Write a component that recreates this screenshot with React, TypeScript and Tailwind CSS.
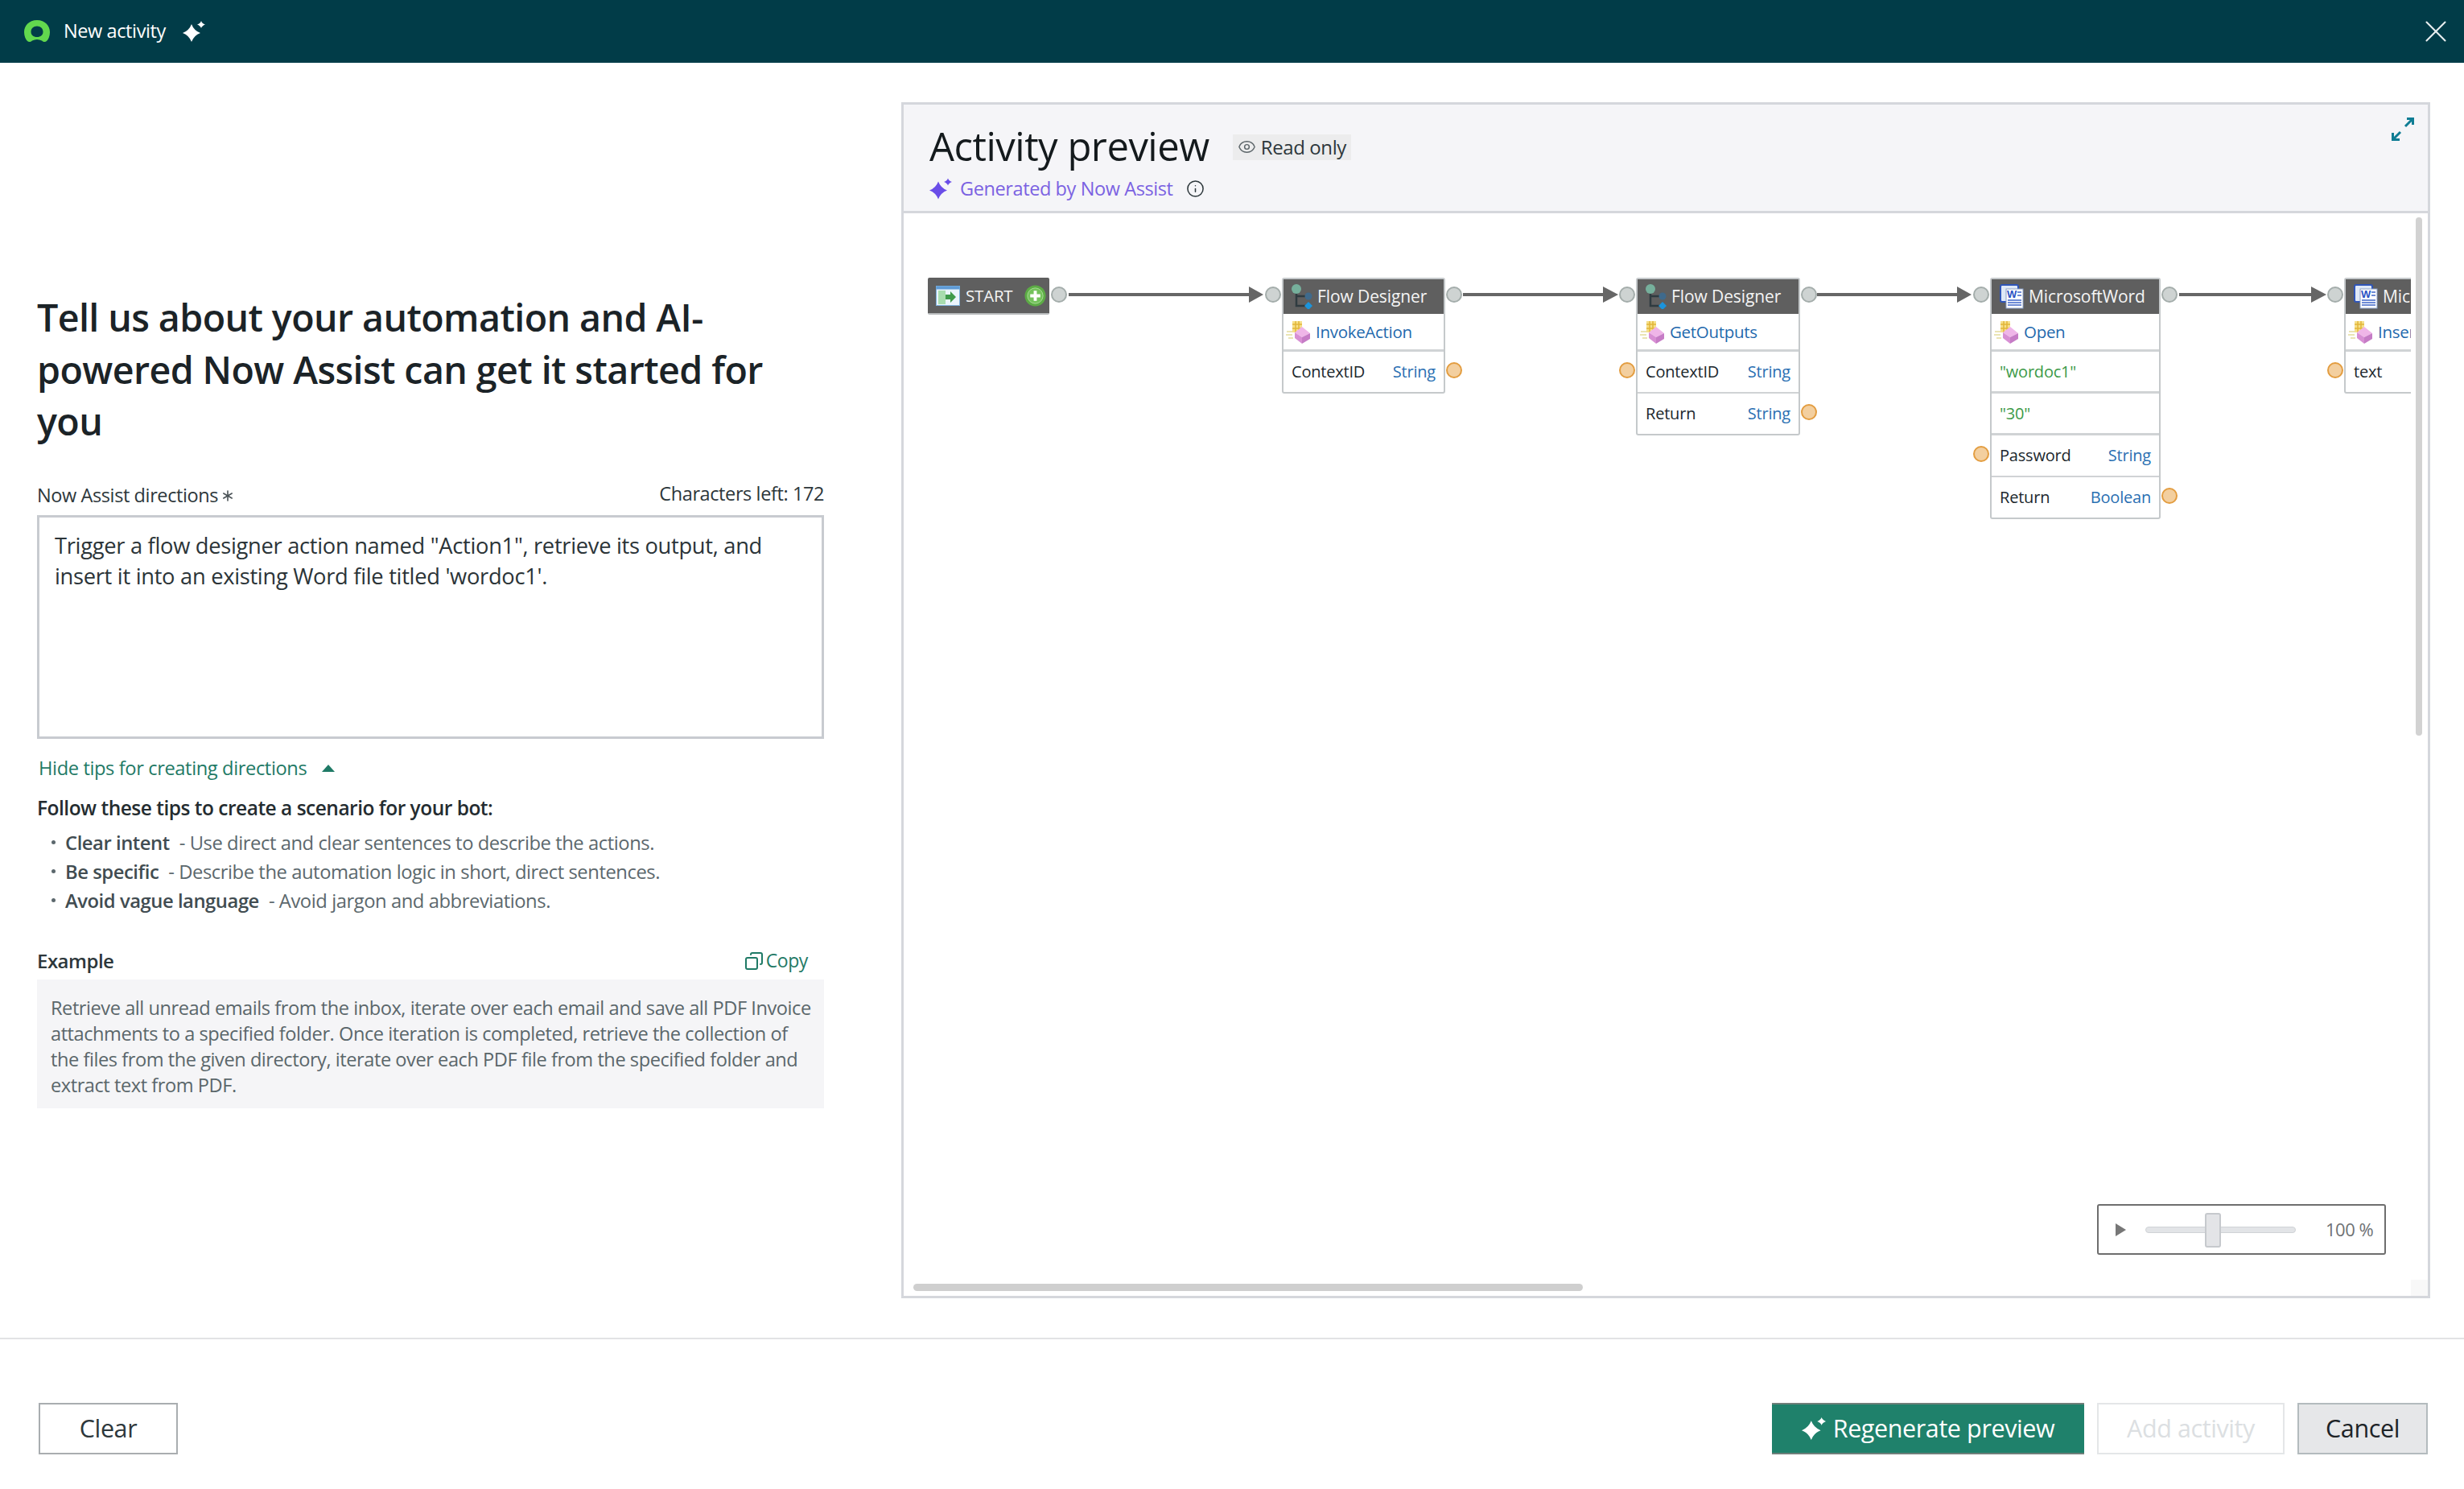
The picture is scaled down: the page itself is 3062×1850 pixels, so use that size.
import React from 'react'
import { X, Eye, Info, Copy, Asterisk } from 'lucide-react'

const Sparkles = ({ className }: { className: string }) => (
  <svg viewBox="0 0 28 26" className={className} fill="currentColor">
    <path d="M11 4 Q14 12 22 15 Q14 18 11 26 Q8 18 0 15 Q8 12 11 4Z" />
    <path d="M23 0 Q24 3 28 4.5 Q24 6 23 9 Q22 6 18 4.5 Q22 3 23 0Z" />
  </svg>
)

const Logo = () => (
  <svg viewBox="0 0 32 28" className="w-[32px] h-[28px]">
    <path
      fillRule="evenodd"
      fill="#62d84e"
      d="M16 0 C26 0 32 7 32 15 C32 20 30 24 28 26 C26 28 24 27 22 25.5 C18 23.5 14 23.5 10 25.5 C8 27 6 28 4 26 C2 24 0 20 0 15 C0 7 6 0 16 0Z M16 7.5 C11.5 7.5 8.5 10.5 8.5 14.5 C8.5 18.5 11.5 21 16 21 C20.5 21 23.5 18.5 23.5 14.5 C23.5 10.5 20.5 7.5 16 7.5Z"
    />
  </svg>
)

const ExpandIcon = () => (
  <svg viewBox="0 0 28 29" className="w-[28px] h-[29px]" fill="none" stroke="#0f7d94" strokeWidth="3">
    <path d="M17 11 L27 1 M19 1.5 H26.5 V9" />
    <path d="M11 18 L1.5 27.5 M1.5 19 V27.5 H10" />
  </svg>
)

const StartIcon = () => (
  <svg viewBox="0 0 30 25" className="w-[30px] h-[25px] shrink-0">
    <rect x="0.5" y="0.5" width="29" height="24" fill="#eaf4fb" stroke="#7fb2dc" />
    <rect x="0.5" y="0.5" width="29" height="4" fill="#5f9bd5" />
    <rect x="3" y="6" width="9" height="17" fill="#a8dcae" />
    <path d="M12 11 H18 V7 L25 14 L18 21 V17 H12Z" fill="#3f9a4a" />
  </svg>
)

const PlusIcon = () => (
  <svg viewBox="0 0 28 28" className="w-[27px] h-[27px] shrink-0">
    <circle cx="14" cy="14" r="13.5" fill="#5cab45" />
    <circle cx="14" cy="14" r="10" fill="#74c25c" stroke="#a9dc97" />
    <path d="M14 7.5 V20.5 M7.5 14 H20.5" stroke="#ffffff" strokeWidth="4" />
  </svg>
)

const FlowIcon = () => (
  <svg viewBox="0 0 26 31" className="w-[26px] h-[31px] shrink-0">
    <path d="M6 10 V27 H19 M6 15 H19" fill="none" stroke="#2f3b40" strokeWidth="2.5" />
    <circle cx="6" cy="6" r="6" fill="#76b09c" />
    <circle cx="21" cy="15" r="4.5" fill="#3f6a8c" />
    <path d="M21 22 L26 27 L21 32 L16 27Z" fill="#1b94dc" />
  </svg>
)

const WordIcon = () => (
  <svg viewBox="0 0 30 31" className="w-[30px] h-[31px] shrink-0">
    <rect x="1" y="1" width="22" height="21" rx="2" fill="#dfe8f7" stroke="#2f55b8" strokeWidth="2" />
    <rect x="8" y="6" width="21" height="24" fill="#ffffff" stroke="#8aa0c8" />
    <text x="9" y="17" fontSize="13" fontWeight="700" fill="#2b52c4" fontFamily="Liberation Sans, sans-serif">
      W
    </text>
    <path d="M22 10 H27 M22 14 H27 M10 20 H27 M10 23 H27 M10 26 H27" stroke="#3f66c9" strokeWidth="1.5" />
  </svg>
)

const ActionIcon = () => (
  <svg viewBox="0 0 30 29" className="w-[30px] h-[29px] shrink-0">
    <path d="M8 1 H20 V15 H8Z" fill="#f6e08a" />
    <path d="M8 5 H20 M8 10 H20 M12 1 V15 M16 1 V15" stroke="#e2b53a" strokeWidth="1.5" />
    <path d="M1 14 H8 M0 18 H8 M3 22 H9" stroke="#e4dc9c" strokeWidth="1.5" />
    <path d="M20 8 L30 16 L20 21 L11 15Z" fill="#efb5e8" />
    <path d="M11 15 L20 21 V29 L11 22Z" fill="#d88fd4" />
    <path d="M30 16 V23 L20 29 V21Z" fill="#c67cc6" />
  </svg>
)

const GreyPort = ({ className }: { className: string }) => (
  <span className={`absolute w-[20px] h-[20px] rounded-full bg-[#ced3d2] border-2 border-[#a4adab] ${className}`} />
)

const OrangePort = ({ className }: { className: string }) => (
  <span className={`absolute w-[20px] h-[20px] rounded-full bg-[#f3cf9f] border-2 border-[#e39d40] ${className}`} />
)

type Row = {
  name: string
  type?: string
  literal?: boolean
  port?: 'left' | 'right'
}

const FlowNode = ({
  className,
  icon,
  title,
  action,
  rows,
}: {
  className: string
  icon: React.ReactNode
  title: string
  action: string
  rows: Row[]
}) => (
  <div className={`absolute border-2 border-[#c5c9cb] rounded-[3px] bg-white ${className}`}>
    <div className="relative flex items-center gap-[6px] h-[43px] bg-[#5f5f5f] pl-[10px] text-[21px] tracking-[-0.1px] text-[#f4f4f4] whitespace-nowrap">
      {icon}
      <span>{title}</span>
      <GreyPort className="-left-[23px] top-[9px]" />
      <GreyPort className="-right-[23px] top-[9px]" />
    </div>
    <div className="flex items-center gap-[7px] h-[47px] pl-[3px] border-b-[3px] border-[#d0d3d5] text-[20.5px] tracking-[-0.3px] text-[#1f69ad] whitespace-nowrap">
      <ActionIcon />
      <span>{action}</span>
    </div>
    {rows.map((row, i) => (
      <div
        key={row.name}
        className={`relative flex items-center justify-between px-[10px] text-[20px] tracking-[-0.2px] whitespace-nowrap ${
          i === rows.length - 1
            ? 'h-[50px]'
            : row.literal
              ? 'h-[52px] border-b-[3px] border-[#d0d3d5]'
              : 'h-[52px] border-b-2 border-[#d0d3d5]'
        }`}
      >
        <span className={row.literal ? 'text-[#3c9a48]' : 'text-[#20282d]'}>{row.name}</span>
        {row.type && <span className="text-[#2a6fb2]">{row.type}</span>}
        {row.port === 'left' && <OrangePort className="-left-[23px] top-[13px]" />}
        {row.port === 'right' && <OrangePort className="-right-[23px] top-[13px]" />}
      </div>
    ))}
  </div>
)

const Connectors = () => (
  <svg className="absolute left-0 top-0 w-[1873px] h-[200px]" fill="#666666">
    <g stroke="#666666" strokeWidth="4">
      <line x1="205" y1="101" x2="430" y2="101" />
      <line x1="695" y1="101" x2="870" y2="101" />
      <line x1="1135" y1="101" x2="1310" y2="101" />
      <line x1="1585" y1="101" x2="1750" y2="101" />
    </g>
    <polygon points="429,91 447,101 429,111" />
    <polygon points="869,91 888,101 869,111" />
    <polygon points="1309,91 1327,101 1309,111" />
    <polygon points="1749,91 1768,101 1749,111" />
  </svg>
)

export default function App() {
  return (
    <div className="w-[3062px] h-[1850px] flex flex-col bg-white overflow-hidden [font-family:'Open_Sans','Noto_Sans',sans-serif]">
      {/* 顶部标题栏 */}
      <header className="h-[78px] shrink-0 bg-[#013c48] flex items-center pl-[30px] pr-[12px] text-white">
        <Logo />
        <span className="ml-[17px] text-[23.5px] tracking-[-0.4px]">New activity</span>
        <Sparkles className="ml-[21px] w-[28px] h-[26px] text-white" />
        <X className="ml-auto w-[46px] h-[46px] text-[#e8eeef]" strokeWidth={1.1} />
      </header>

      <main className="flex-1 flex min-h-0">
        {/* 左侧表单 */}
        <section className="w-[1024px] shrink-0 pl-[46px] pt-[284px] text-[#20282d]">
          <h1 className="text-[46.6px] leading-[64.5px] font-semibold tracking-[-0.6px] text-[#1b2327]">
            Tell us about your automation and AI-
            <br />
            powered Now Assist can get it started for
            <br />
            you
          </h1>
          <div className="mt-[46px] flex items-end justify-between h-[32px] text-[23.5px] tracking-[-0.4px] text-[#2d373b]">
            <span className="flex items-center">
              Now Assist directions
              <Asterisk className="w-[24px] h-[24px] text-[#4a5256]" strokeWidth={1.6} />
            </span>
            <span className="pb-[2px]">Characters left: 172</span>
          </div>
          <textarea
            readOnly
            className="mt-[6px] block w-full h-[278px] border-[3px] border-[#c8cbd0] px-[19px] py-[16px] text-[27.3px] leading-[38.5px] tracking-[-0.3px] text-[#2b3438] resize-none outline-none"
            value={`Trigger a flow designer action named "Action1", retrieve its output, and\ninsert it into an existing Word file titled 'wordoc1'.`}
          />
          <div className="mt-[21px] ml-[2px] flex items-center gap-[19px] h-[32px] text-[23.7px] tracking-[-0.4px] text-[#1f7a66]">
            <span>Hide tips for creating directions</span>
            <span className="w-0 h-0 border-x-[8px] border-x-transparent border-b-[9px] border-b-[#1f7a66]" />
          </div>
          <div className="mt-[17px] text-[24.5px] leading-[32px] font-semibold tracking-[-0.5px] text-[#242c30]">
            Follow these tips to create a scenario for your bot:
          </div>
          <ul className="mt-[11px] ml-[18px] flex flex-col gap-[4px] text-[23.8px] leading-[32px] tracking-[-0.45px] text-[#5c686d]">
            {[
              ['Clear intent', '- Use direct and clear sentences to describe the actions.'],
              ['Be specific', '- Describe the automation logic in short, direct sentences.'],
              ['Avoid vague language', '- Avoid jargon and abbreviations.'],
            ].map(([name, text]) => (
              <li key={name} className="flex items-center gap-[12px] whitespace-nowrap">
                <span className="w-[5px] h-[5px] rounded-full bg-[#5c686d]" />
                <span>
                  <span className="font-semibold text-[#414c51]">{name}</span>
                  <span className="ml-[12px]">{text}</span>
                </span>
              </li>
            ))}
          </ul>
          <div className="mt-[42px] flex items-center justify-between pr-[20px] h-[34px]">
            <span className="text-[24px] font-semibold tracking-[-0.5px] text-[#2d373b]">Example</span>
            <span className="flex items-center gap-[3px] text-[23px] tracking-[-0.4px] text-[#1f7a66]">
              <Copy className="w-[24px] h-[24px] -scale-x-100" strokeWidth={2} />
              Copy
            </span>
          </div>
          <div className="mt-[6px] bg-[#f5f5f7] h-[160px] px-[17px] py-[19px] text-[23.6px] leading-[32px] tracking-[-0.45px] text-[#5b676b] whitespace-nowrap">
            Retrieve all unread emails from the inbox, iterate over each email and save all PDF Invoice
            <br />
            attachments to a specified folder. Once iteration is completed, retrieve the collection of
            <br />
            the files from the given directory, iterate over each PDF file from the specified folder and
            <br />
            extract text from PDF.
          </div>
        </section>

        {/* 右侧预览 */}
        <section className="ml-[96px] mt-[49px] w-[1900px] h-[1486px] border-[3px] border-[#d5d7dc] flex flex-col">
          <div className="relative h-[135px] shrink-0 bg-[#f5f5f8] border-b-[3px] border-[#d5d7dc] pl-[32px] pt-[20px]">
            <div className="flex items-center gap-[29px]">
              <span className="text-[49px] leading-[62px] tracking-[-0.5px] font-medium text-[#141a1d]">Activity preview</span>
              <span className="mt-[3px] flex items-center gap-[6px] h-[32px] px-[6px] bg-[#ececed] text-[24px] tracking-[-0.4px] text-[#2d373b]">
                <Eye className="w-[23px] h-[23px] text-[#5b6468]" strokeWidth={1.5} />
                Read only
              </span>
            </div>
            <div className="mt-[5px] flex items-center text-[23.5px] tracking-[-0.4px] text-[#7b62e2]">
              <Sparkles className="w-[28px] h-[27px] text-[#6a4de8]" />
              <span className="ml-[10px]">Generated by Now Assist</span>
              <Info className="ml-[16px] w-[23px] h-[23px] text-[#2d373b]" strokeWidth={1.6} />
            </div>
            <div className="absolute right-[17px] top-[16px]">
              <ExpandIcon />
            </div>
          </div>

          <div className="flex-1 flex min-h-0">
            {/* 流程画布 */}
            <div className="relative flex-1 overflow-hidden bg-white">
              <Connectors />
              <div className="absolute left-[30px] top-[80px] w-[151px] h-[46px] rounded-[2px] bg-[#5f5f5f] border-b-2 border-[#b9bcbd] flex items-center pl-[10px] pr-[4px] gap-[7px] text-[20.5px] tracking-[-0.2px] text-[#f4f4f4]">
                <StartIcon />
                <span>START</span>
                <span className="ml-auto flex">
                  <PlusIcon />
                </span>
                <GreyPort className="-right-[22px] top-[11px]" />
              </div>
              <FlowNode
                className="left-[470px] top-[80px] w-[203px]"
                icon={<FlowIcon />}
                title="Flow Designer"
                action="InvokeAction"
                rows={[{ name: 'ContextID', type: 'String', port: 'right' }]}
              />
              <FlowNode
                className="left-[910px] top-[80px] w-[204px]"
                icon={<FlowIcon />}
                title="Flow Designer"
                action="GetOutputs"
                rows={[
                  { name: 'ContextID', type: 'String', port: 'left' },
                  { name: 'Return', type: 'String', port: 'right' },
                ]}
              />
              <FlowNode
                className="left-[1350px] top-[80px] w-[212px]"
                icon={<WordIcon />}
                title="MicrosoftWord"
                action="Open"
                rows={[
                  { name: '"wordoc1"', literal: true },
                  { name: '"30"', literal: true },
                  { name: 'Password', type: 'String', port: 'left' },
                  { name: 'Return', type: 'Boolean', port: 'right' },
                ]}
              />
              <FlowNode
                className="left-[1790px] top-[80px] w-[212px]"
                icon={<WordIcon />}
                title="MicrosoftWord"
                action="InsertText"
                rows={[{ name: 'text', port: 'left' }]}
              />

              {/* 缩放控件 */}
              <div className="absolute left-[1483px] top-[1231px] w-[359px] h-[63px] bg-white border-2 border-[#6e6e6e] rounded-[3px] flex items-center pl-[21px] text-[22px] text-[#6f7274]">
                <span className="w-0 h-0 border-y-[8px] border-y-transparent border-l-[13px] border-l-[#777777]" />
                <div className="relative ml-[24px] w-[187px] h-[8px] rounded-full bg-[#e2e4e7] border border-[#d0d3d6]">
                  <span className="absolute left-[73px] -top-[18px] w-[20px] h-[43px] rounded-[3px] bg-[#e3e4e7] border-2 border-[#c6c9cd]" />
                </div>
                <span className="ml-[37px] tracking-[-0.5px]">100 %</span>
              </div>

              <div className="absolute left-[12px] bottom-[6px] w-[832px] h-[9px] rounded-full bg-[#cfcfcf]" />
            </div>

            {/* 滚动条栏 */}
            <div className="w-[21px] shrink-0 flex flex-col justify-between">
              <div className="ml-[6px] mt-[5px] w-[8px] h-[644px] rounded-full bg-[#d2d2d2]" />
              <div className="w-[21px] h-[20px] bg-[#f8f8f8]" />
            </div>
          </div>
        </section>
      </main>

      {/* 底部按钮 */}
      <footer className="h-[188px] shrink-0 border-t-2 border-[#e2e3e5] pt-[79px] pl-[48px] pr-[45px] flex items-start justify-between text-[30.5px] tracking-[-0.4px]">
        <button className="w-[173px] h-[64px] border-2 border-[#a9adb0] text-[#2d373b]">Clear</button>
        <div className="flex gap-[16px]">
          <button className="w-[388px] h-[64px] bg-[#1f816b] border-y-2 border-[#6f7f7a] text-white flex items-center justify-center gap-[9px]">
            <Sparkles className="w-[30px] h-[28px] text-white" />
            Regenerate preview
          </button>
          <button className="w-[233px] h-[64px] border-2 border-[#e4e6e8] text-[#dcdfe2]">Add activity</button>
          <button className="w-[162px] h-[64px] bg-[#e6e7e9] border-2 border-[#b3bbbe] text-[#1d2327]">Cancel</button>
        </div>
      </footer>
    </div>
  )
}
